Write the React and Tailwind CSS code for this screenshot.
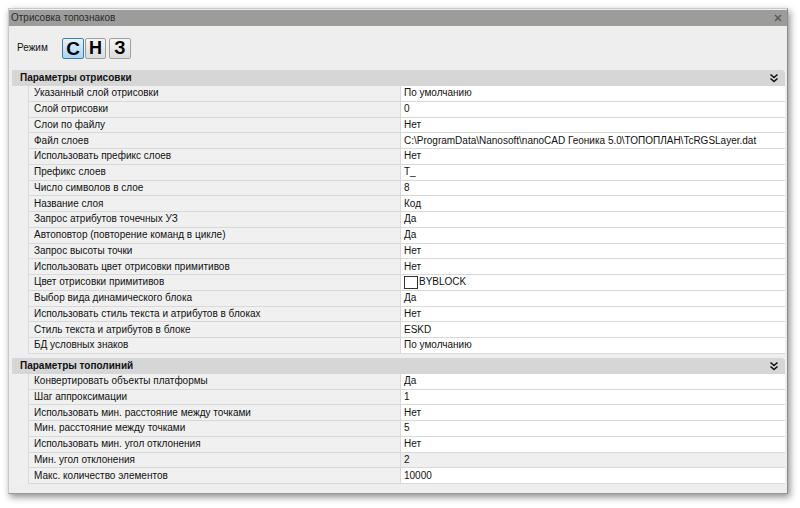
import React from "react";

const drawRows = [
  ["Указанный слой отрисовки", "По умолчанию"],
  ["Слой отрисовки", "0"],
  ["Слои по файлу", "Нет"],
  ["Файл слоев", "C:\\ProgramData\\Nanosoft\\nanoCAD Геоника 5.0\\ТОПОПЛАН\\TcRGSLayer.dat"],
  ["Использовать префикс слоев", "Нет"],
  ["Префикс слоев", "T_"],
  ["Число символов в слое", "8"],
  ["Название слоя", "Код"],
  ["Запрос атрибутов точечных УЗ", "Да"],
  ["Автоповтор (повторение команд в цикле)", "Да"],
  ["Запрос высоты точки", "Нет"],
  ["Использовать цвет отрисовки примитивов", "Нет"],
  ["Цвет отрисовки примитивов", "BYBLOCK", "color"],
  ["Выбор вида динамического блока", "Да"],
  ["Использовать стиль текста и атрибутов в блоках", "Нет"],
  ["Стиль текста и атрибутов в блоке", "ESKD"],
  ["БД условных знаков", "По умолчанию"],
];

const lineRows = [
  ["Конвертировать объекты платформы", "Да"],
  ["Шаг аппроксимации", "1"],
  ["Использовать мин. расстояние между точками", "Нет"],
  ["Мин. расстояние между точками", "5"],
  ["Использовать мин. угол отклонения", "Нет"],
  ["Мин. угол отклонения", "2", "gray"],
  ["Макс. количество элементов", "10000"],
];

function Chevrons() {
  return (
    <svg width="10" height="10" viewBox="0 0 10 10" className="mr-[6px]">
      <path d="M1.5 1.5 L5 4.5 L8.5 1.5" fill="none" stroke="#111" strokeWidth="1.6" />
      <path d="M1.5 5.5 L5 8.5 L8.5 5.5" fill="none" stroke="#111" strokeWidth="1.6" />
    </svg>
  );
}

function Section({ title, rows }) {
  return (
    <div>
      <div className="h-[16px] bg-[#d6d6d6] rounded-tr-[4px] flex items-center justify-between pl-[8px] font-bold text-[#111]">
        <span>{title}</span>
        <Chevrons />
      </div>
      {rows.map(([name, value, kind], i) => (
        <div key={i} className="flex h-[15.76px]">
          <div className="w-[16px] shrink-0 bg-[#efefef]" />
          <div className="w-[372px] shrink-0 bg-[#f0f0f0] border-l border-b border-[#d9d9d9] pl-[5px] flex items-center text-[#111] truncate">
            {name}
          </div>
          <div
            className={
              "flex-1 border-l border-b border-[#d9d9d9] pl-[3px] flex items-center text-[#111] truncate " +
              (kind === "gray" ? "bg-[#efefef]" : "bg-white")
            }
          >
            {kind === "color" && (
              <span className="w-[14px] h-[13px] border border-[#333] bg-white mr-[1px] shrink-0" />
            )}
            {value}
          </div>
        </div>
      ))}
    </div>
  );
}

export default function App() {
  return (
    <div className="w-[800px] h-[508px] bg-white pt-[8px] pl-[8px]" style={{ fontFamily: '"Liberation Sans", Arial, sans-serif' }}>
      <div className="w-[780px] h-[486px] bg-[#eeeeee] border border-[#c9c9c9] border-r-[#8a8a8a] border-b-[#9a9a9a] shadow-[2px_3px_7px_rgba(0,0,0,0.45)] flex flex-col text-[10px] leading-none">
        <div className="h-[16px] bg-[#9c9d9b] flex items-center justify-between pl-[2px] pr-[5px] text-[#2a2a2a] mt-[1px]">
          <span>Отрисовка топознаков</span>
          <svg width="8" height="8" viewBox="0 0 8 8">
            <path d="M1 1 L7 7 M7 1 L1 7" stroke="#555" strokeWidth="1.4" />
          </svg>
        </div>
        <div className="h-[44px] flex items-center pl-[8px] gap-[1px]">
          <span className="w-[44px] text-[#111]">Режим</span>
          <button className="w-[22px] h-[21px] border border-[#3c7fb1] rounded-[2px] bg-gradient-to-b from-[#e6f3fc] to-[#a9d4f3] text-[19px] font-bold text-black flex items-center justify-center">С</button>
          <button className="w-[21px] h-[21px] border border-[#a0a0a0] rounded-[2px] bg-gradient-to-b from-[#f5f5f5] to-[#dcdcdc] text-[18px] font-bold text-black flex items-center justify-center">Н</button>
          <button className="ml-[2px] w-[22px] h-[21px] border border-[#a0a0a0] rounded-[2px] bg-gradient-to-b from-[#f5f5f5] to-[#dcdcdc] text-[18px] font-bold text-black flex items-center justify-center">З</button>
        </div>
        <div className="pl-[3px] pr-[2px] flex flex-col gap-[4px]">
          <Section title="Параметры отрисовки" rows={drawRows} />
          <Section title="Параметры тополиний" rows={lineRows} />
        </div>
      </div>
    </div>
  );
}
